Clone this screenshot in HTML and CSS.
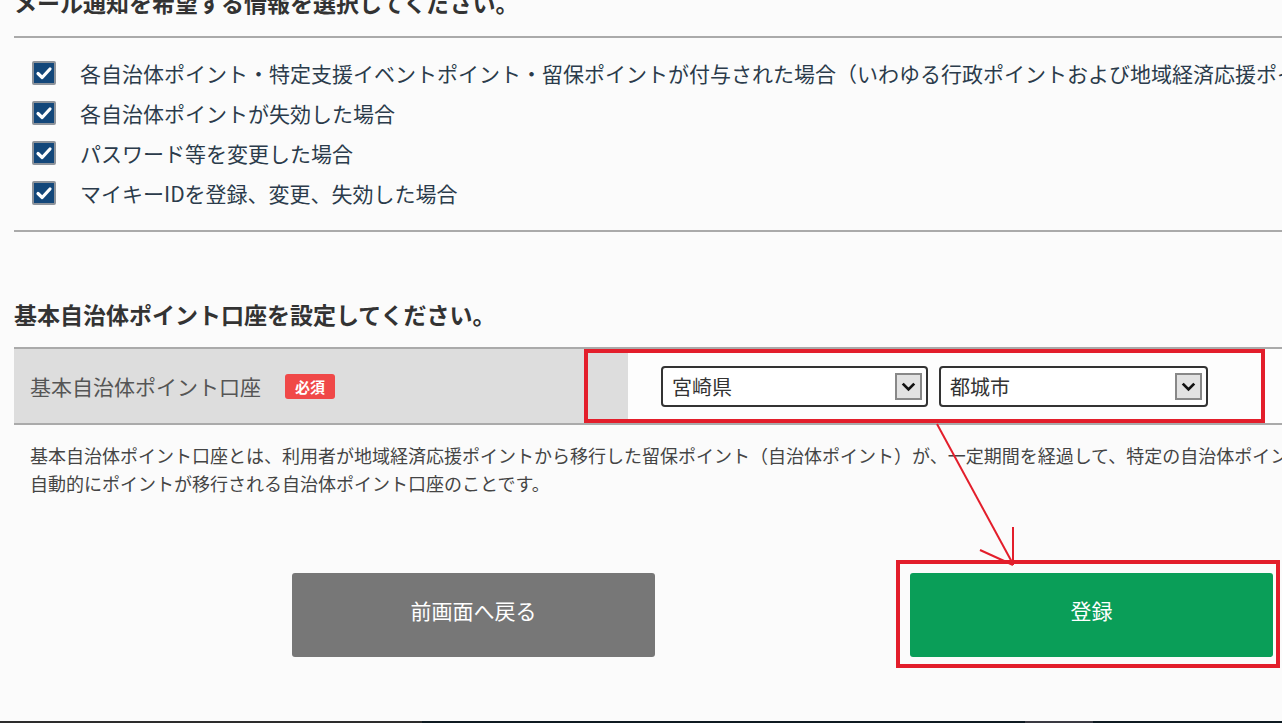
FILE: index.html
```html
<!DOCTYPE html>
<html lang="ja">
<head>
    <meta charset="UTF-8">
    <meta name="viewport" content="width=device-width, initial-scale=1.0">
    <title>通知設定</title>
    <link rel="stylesheet" href="styles.css">
</head>
<body>
    <div class="page">
        <h2 class="sec-title first">メール通知を希望する情報を選択してください。</h2>
        <ul class="notify-list">
            <li><span class="check"><svg viewBox="0 0 20 20"><path d="M4 10.5 L8.2 14.5 L16 6" /></svg></span>各自治体ポイント・特定支援イベントポイント・留保ポイントが付与された場合（いわゆる行政ポイントおよび地域経済応援ポイント）</li>
            <li><span class="check"><svg viewBox="0 0 20 20"><path d="M4 10.5 L8.2 14.5 L16 6" /></svg></span>各自治体ポイントが失効した場合</li>
            <li><span class="check"><svg viewBox="0 0 20 20"><path d="M4 10.5 L8.2 14.5 L16 6" /></svg></span>パスワード等を変更した場合</li>
            <li><span class="check"><svg viewBox="0 0 20 20"><path d="M4 10.5 L8.2 14.5 L16 6" /></svg></span>マイキーIDを登録、変更、失効した場合</li>
        </ul>

        <h2 class="sec-title second">基本自治体ポイント口座を設定してください。</h2>
        <div class="form-row">
            <div class="row-label">基本自治体ポイント口座<span class="req">必須</span></div>
            <div class="row-field">
                <div class="select pref">
                    <span>宮崎県</span>
                    <span class="drop"><svg viewBox="0 0 20 20"><path d="M5 7.5 L10 12.5 L15 7.5" /></svg></span>
                </div>
                <div class="select city">
                    <span>都城市</span>
                    <span class="drop"><svg viewBox="0 0 20 20"><path d="M5 7.5 L10 12.5 L15 7.5" /></svg></span>
                </div>
            </div>
        </div>
        <p class="note">基本自治体ポイント口座とは、利用者が地域経済応援ポイントから移行した留保ポイント（自治体ポイント）が、一定期間を経過して、特定の自治体ポイント口座に<br>自動的にポイントが移行される自治体ポイント口座のことです。</p>

        <div class="actions">
            <button class="btn btn-back">前画面へ戻る</button>
            <button class="btn btn-submit">登録</button>
        </div>
    </div>

    <!-- 注釈（赤枠と矢印） -->
    <svg class="annot" width="1282" height="723" viewBox="0 0 1282 723">
        <rect x="586" y="351" width="677" height="70" fill="none" stroke="#e31e2b" stroke-width="4" />
        <rect x="898" y="562" width="380" height="104" fill="none" stroke="#e31e2b" stroke-width="4" />
        <line x1="937" y1="424" x2="1013" y2="564" stroke="#e31e2b" stroke-width="2" />
        <line x1="1013" y1="527" x2="1013" y2="565" stroke="#e31e2b" stroke-width="2" />
        <line x1="980" y1="550" x2="1013" y2="565" stroke="#e31e2b" stroke-width="2" />
    </svg>
    <div class="taskbar"></div>
</body>
</html>
```

FILE: styles.css
```css
body {
    margin: 0;
    background-color: #fbfbfb;
    font-family: "Noto Sans CJK JP", "Noto Sans", sans-serif;
    overflow: hidden;
    height: 723px;
}

.page {
    width: 1537px;
    margin-left: 14px;
    margin-top: -14px;
}

.sec-title {
    margin: 0;
    font-size: 23px;
    font-weight: bold;
    line-height: 32px;
    color: #333;
}

.sec-title.first {
    margin-bottom: 18px;
}

.sec-title.second {
    margin-top: 66px;
    margin-bottom: 17px;
}

.notify-list {
    list-style: none;
    margin: 0;
    padding: 15px 0 17px 18px;
    border-top: 2px solid #aaa;
    border-bottom: 2px solid #aaa;
}

.notify-list li {
    display: flex;
    align-items: center;
    height: 40px;
    font-size: 21px;
    color: #2b3b4b;
    white-space: nowrap;
}

.check {
    width: 20px;
    height: 20px;
    margin-right: 24px;
    background-color: #13477a;
    border: 2px solid #8c929a;
    border-radius: 2px;
    flex-shrink: 0;
}

.check svg {
    display: block;
    width: 20px;
    height: 20px;
}

.check path {
    fill: none;
    stroke: #fff;
    stroke-width: 3.2;
    stroke-linecap: round;
    stroke-linejoin: round;
}

.form-row {
    display: flex;
    height: 74px;
    border-top: 2px solid #aaa;
    border-bottom: 2px solid #aaa;
}

.row-label {
    width: 598px;
    padding-left: 16px;
    background-color: #ddd;
    display: flex;
    align-items: center;
    font-size: 21px;
    color: #555;
}

.req {
    margin-left: 24px;
    width: 50px;
    height: 25px;
    line-height: 25px;
    text-align: center;
    background-color: #f04848;
    color: #fff;
    font-size: 15px;
    font-weight: bold;
    border-radius: 3px;
}

.row-field {
    flex: 1;
    display: flex;
    align-items: center;
    gap: 11px;
    padding-left: 33px;
    background-color: #fdfdfd;
}

.select {
    height: 37px;
    display: flex;
    align-items: center;
    justify-content: space-between;
    padding: 0 4px 0 9px;
    background-color: #fff;
    border: 2px solid #333;
    border-radius: 4px;
    font-size: 20px;
    color: #333;
}

.select.pref {
    width: 250px;
}

.select.city {
    width: 252px;
}

.drop {
    width: 23px;
    height: 23px;
    background-color: #e2e2e2;
    border: 2px solid #888;
}

.drop svg {
    display: block;
    width: 23px;
    height: 23px;
}

.drop path {
    fill: none;
    stroke: #111;
    stroke-width: 2.4;
}

.note {
    margin: 16px 0 0;
    padding-left: 16px;
    font-size: 18px;
    line-height: 28px;
    color: #444;
    white-space: nowrap;
}

.actions {
    display: flex;
    justify-content: center;
    gap: 255px;
    margin-top: 76px;
}

.btn {
    width: 363px;
    height: 84px;
    padding-bottom: 11px;
    border: none;
    border-radius: 3px;
    color: #fff;
    font-family: inherit;
    font-size: 21px;
}

.btn-back {
    background-color: #777;
}

.btn-submit {
    background-color: #0a9e58;
}

.annot {
    position: absolute;
    top: 0;
    left: 0;
}

.taskbar {
    position: absolute;
    left: 0;
    bottom: 0;
    width: 1282px;
    height: 2px;
    background: linear-gradient(to right, #2c2c2c 0, #2c2c2c 422px, #0e1a21 422px, #0e1a21 1025px, #3a3a42 1025px, #3a3a42 1093px, #0e1a21 1093px);
}
```
